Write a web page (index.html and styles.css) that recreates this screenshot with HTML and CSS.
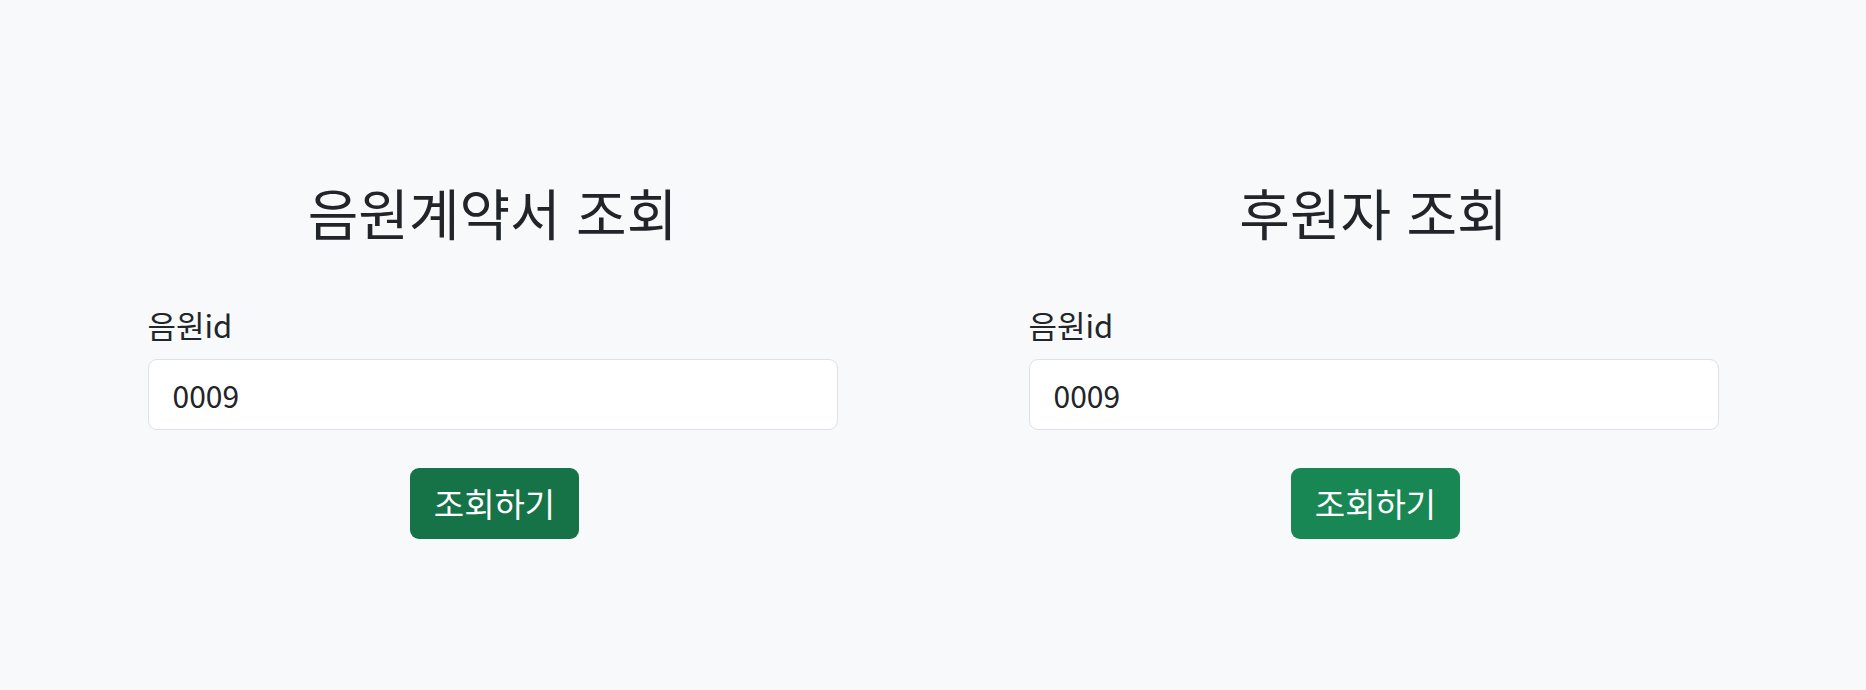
FILE: index.html
```html
<!DOCTYPE html>
<html lang="ko">
<head>
<meta charset="utf-8">
<title>조회</title>
<link rel="stylesheet" href="styles.css">
</head>
<body>
<main class="page">
  <section class="panel">
    <h2 class="panel-title">음원계약서 조회</h2>
    <label class="field-label" for="id1">음원id</label>
    <input class="field-input" id="id1" type="text" value="0009">
    <div class="actions">
      <button class="btn btn-active" type="button">조회하기</button>
    </div>
  </section>
  <section class="panel">
    <h2 class="panel-title">후원자 조회</h2>
    <label class="field-label" for="id2">음원id</label>
    <input class="field-input" id="id2" type="text" value="0009">
    <div class="actions">
      <button class="btn" type="button">조회하기</button>
    </div>
  </section>
</main>
</body>
</html>
```
FILE: styles.css
```css
html, body {
  margin: 0;
  padding: 0;
  background: #f8f9fa;
  color: #212529;
  font-family: "Noto Sans CJK KR", "Noto Sans", sans-serif;
}
.page {
  width: 1571px;
  margin: 0 auto;
  padding-top: 176px;
  display: flex;
  justify-content: space-between;
}
.panel {
  width: 690px;
  display: flex;
  flex-direction: column;
}
.panel-title {
  margin: 0 0 56px 0;
  font-size: 55px;
  font-weight: 400;
  line-height: 70px;
  text-align: center;
}
.field-label {
  font-size: 31px;
  line-height: 45px;
  margin-bottom: 12px;
}
.field-input {
  box-sizing: border-box;
  height: 71px;
  width: 100%;
  padding: 0 24px;
  font-family: inherit;
  font-size: 30px;
  color: #212529;
  background: #fff;
  border: 1.5px solid #dee2e6;
  border-radius: 9px;
  outline: none;
}
.actions {
  display: flex;
  justify-content: center;
  margin-top: 38px;
  padding-left: 4px;
}
.btn {
  box-sizing: border-box;
  height: 71px;
  padding: 0 24px;
  font-family: inherit;
  font-size: 33px;
  line-height: 71px;
  color: #fff;
  background: #198754;
  border: none;
  border-radius: 9px;
}
.btn-active {
  background: #157347;
}
```
